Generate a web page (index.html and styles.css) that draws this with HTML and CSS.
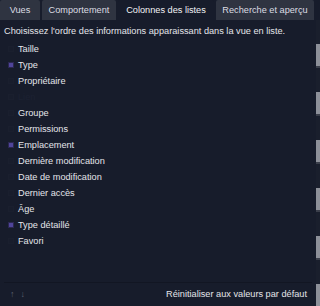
FILE: index.html
```html
<!DOCTYPE html>
<html lang="fr">
<head>
    <meta charset="UTF-8">
    <title>Colonnes des listes</title>
    <link rel="stylesheet" href="styles.css">
</head>
<body>
    <div class="window">
        <div class="main">
            <div class="tabs">
                <span class="tab">Vues</span>
                <span class="tab">Comportement</span>
                <span class="tab active">Colonnes des listes</span>
                <span class="tab">Recherche et aperçu</span>
            </div>
            <p class="hint">Choisissez l'ordre des informations apparaissant dans la vue en liste.</p>
            <ul class="columns">
                <li><span class="check"></span>Taille</li>
                <li><span class="check on"></span>Type</li>
                <li><span class="check"></span>Propriétaire</li>
                <li class="faded"><span class="check"></span>Lien</li>
                <li><span class="check"></span>Groupe</li>
                <li><span class="check"></span>Permissions</li>
                <li><span class="check on"></span>Emplacement</li>
                <li><span class="check"></span>Dernière modification</li>
                <li><span class="check"></span>Date de modification</li>
                <li><span class="check"></span>Dernier accès</li>
                <li><span class="check"></span>Âge</li>
                <li><span class="check on"></span>Type détaillé</li>
                <li><span class="check"></span>Favori</li>
            </ul>
            <footer>
                <div class="arrows">
                    <span class="arrow">↑</span>
                    <span class="arrow">↓</span>
                </div>
                <span class="reset">Réinitialiser aux valeurs par défaut</span>
            </footer>
        </div>
        <div class="edge"></div>
    </div>
</body>
</html>
```

FILE: styles.css
```css
html, body {
    margin: 0;
    height: 100%;
    background: #171c2b;
    color: #e4e5ea;
    font-family: "Liberation Sans", Arial, sans-serif;
    font-size: 9.2px;
}

.window {
    display: flex;
    height: 306px;
}

.main {
    flex: 1;
    display: flex;
    flex-direction: column;
}

.tabs {
    display: flex;
    flex: none;
    gap: 2px;
    height: 20px;
}

.tab {
    flex: none;
    display: flex;
    align-items: center;
    justify-content: center;
    white-space: nowrap;
    background: #2f3441;
    color: #dcdde3;
    border-radius: 2px 2px 0 0;
}

.tab:nth-child(1) { width: 40px; }
.tab:nth-child(2) { width: 74px; }
.tab:nth-child(3) { width: 96px; }
.tab:nth-child(4) { width: 98px; }

.tab.active {
    background: #171c2b;
    color: #f2f2f5;
}

.hint {
    margin: 5px 0 0 4px;
    line-height: 13px;
    white-space: nowrap;
}

.columns {
    list-style: none;
    margin: 3px 4px 0 4px;
    padding: 0;
    flex: 1;
    border-bottom: 1px solid #121623;
}

.columns li {
    display: flex;
    align-items: center;
    height: 16px;
    padding-left: 4px;
}

.columns li.faded {
    color: #1c2132;
}

.check {
    width: 4px;
    height: 4px;
    margin-right: 4px;
    border: 1px solid #1a1f2e;
    background: #181d2c;
}

.check.on {
    background: #50459a;
    border-color: #2b2750;
}

footer {
    flex: none;
    display: flex;
    align-items: center;
    justify-content: space-between;
    height: 22px;
    padding: 0 9px 0 10px;
    margin-bottom: 1px;
}

.arrows {
    display: flex;
    gap: 6px;
}

.arrow {
    color: #5d6170;
    font-size: 9px;
}

.edge {
    width: 4px;
    margin-top: 20px;
    background: repeating-linear-gradient(#1a1f2d 0 24px, #8d9099 24px 46px, #3b3f4b 46px 48px);
}
```
